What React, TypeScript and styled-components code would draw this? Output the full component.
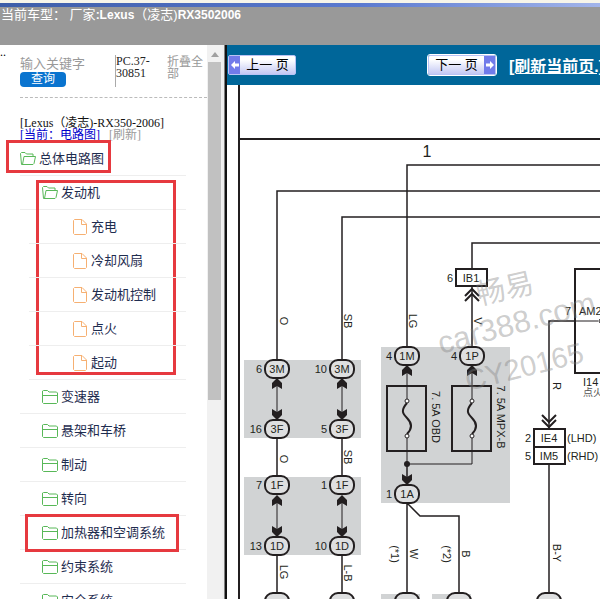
import React from "react";
import styled, { createGlobalStyle } from "styled-components";

const SANS = '"Liberation Sans", "Noto Sans CJK SC", sans-serif';
const SERIF = '"Liberation Serif", "Noto Sans CJK SC", serif';
const INK = "#231f20";

const GlobalStyle = createGlobalStyle`
  * { box-sizing: border-box; }
  body { margin: 0; background: #fff; font-family: ${SANS}; }
  button { border: 0; padding: 0; font: inherit; cursor: pointer; }
`;

const Page = styled.div`
  display: flex;
  flex-direction: column;
  height: 100vh;
  overflow: hidden;
`;

const WindowEdge = styled.div`
  flex: none;
  height: 7px;
  border-top: 3px solid #f7f5ea;
  background: linear-gradient(90deg, #3d5da8, #5b7ad0 60%, #a3b5ea);
`;

const Header = styled.header`
  flex: none;
  height: 38px;
  padding-left: 1px;
  background: #999;
  color: #fff;
  font-size: 13px;
  line-height: 16px;
  white-space: nowrap;
`;

const ModelName = styled.b`
  font-size: 12px;
`;

const Columns = styled.div`
  display: flex;
  flex: 1;
  min-height: 0;
`;

const Sidebar = styled.aside`
  display: flex;
  flex: none;
  width: 227px;
  background: #fff;
`;

const Dots = styled.span`
  flex: none;
  width: 20px;
  height: 14px;
  font: 12px/14px ${SERIF};
`;

const SidebarBody = styled.div`
  flex: 1;
  min-width: 0;
`;

const SearchPanel = styled.form`
  display: grid;
  grid-template-columns: 95px 52px 1fr;
  align-items: start;
  height: 53px;
  padding-top: 10px;
  border-bottom: 1px dashed #bbb;
`;

const SearchField = styled.div`
  display: flex;
  flex-direction: column;
  align-items: flex-start;
  padding-top: 1px;
`;

const SearchInput = styled.input`
  width: 86px;
  height: 16px;
  padding: 0;
  border: 0;
  outline: 0;
  background: transparent;
  font: 13px/16px ${SANS};
  &::placeholder { color: #999; opacity: 1; }
`;

const SearchButton = styled.button`
  width: 46px;
  height: 15px;
  border-radius: 4px;
  background: #0a74cf;
  color: #fff;
  font-size: 12px;
  line-height: 15px;
`;

const PartCode = styled.div`
  height: 32px;
  border-left: 1px solid #aaa;
  font: 12px/12px ${SERIF};
  color: #222;
`;

const CollapseButton = styled.button`
  padding-top: 1px;
  background: none;
  color: #999;
  font-size: 12px;
  line-height: 12px;
  text-align: left;
`;

const TreeHeading = styled.div`
  height: 44px;
  padding-top: 19px;
  font: 12px/12px ${SERIF};
  white-space: nowrap;
  color: #111;
`;

const HeadingLink = styled.a<{ $muted?: boolean }>`
  margin-right: 9px;
  color: ${(p) => (p.$muted ? "#999" : "#00c")};
  text-decoration: ${(p) => (p.$muted ? "none" : "underline")};
`;

const Tree = styled.ul<{ $nested?: boolean }>`
  width: ${(p) => (p.$nested ? "auto" : "166px")};
  margin: 0;
  padding: 0;
  list-style: none;
`;

const Item = styled.li`
  position: relative;
`;

const Row = styled.button<{ $level: number }>`
  display: flex;
  align-items: center;
  gap: ${(p) => (p.$level > 1 ? "4px" : "3px")};
  width: ${(p) => (p.$level > 1 ? "157px" : "100%")};
  height: 34px;
  margin-left: ${(p) => (p.$level > 1 ? "9px" : "0")};
  padding-left: ${(p) => [0, 22, 44][p.$level]}px;
  border-bottom: 1px solid #eee;
  background: none;
  color: #1f2d50;
  font-size: 13px;
  line-height: 18px;
  white-space: nowrap;
`;

const Highlight = styled.span<{ $left: number; $top: number; $width: number; $height: number }>`
  position: absolute;
  left: ${(p) => p.$left}px;
  top: ${(p) => p.$top}px;
  width: ${(p) => p.$width}px;
  height: ${(p) => p.$height}px;
  border: 3px solid #e6393f;
  pointer-events: none;
`;

const ScrollTrack = styled.div`
  display: flex;
  flex: none;
  flex-direction: column;
  align-items: center;
  width: 15px;
  background: #f1f1f1;
`;

const ScrollArrow = styled.span`
  height: 12px;
  margin-bottom: 5px;
  border: 4px solid transparent;
  border-top-width: 3px;
  border-bottom: 5px solid #a0a0a0;
`;

const ScrollThumb = styled.span`
  width: 13px;
  height: 338px;
  background: #c1c1c1;
`;

const Splitter = styled.div`
  flex: none;
  width: 5px;
  border-left: 2px solid #eee;
  border-right: 2px solid #111;
  background: #808080;
`;

const Main = styled.main`
  display: flex;
  flex: 1;
  flex-direction: column;
  min-width: 0;
  overflow: hidden;
`;

const Toolbar = styled.nav`
  display: flex;
  flex: none;
  align-items: center;
  height: 40px;
  padding-left: 1px;
  background: #069;
  white-space: nowrap;
`;

const PagerButton = styled.button<{ $next?: boolean }>`
  display: flex;
  flex: none;
  flex-direction: ${(p) => (p.$next ? "row-reverse" : "row")};
  width: 68px;
  height: 20px;
  margin-right: ${(p) => (p.$next ? 13 : 132)}px;
  border: 1px solid #b9c3f5;
  border-radius: 2px;
  outline: ${(p) => (p.$next ? "1px solid #fff" : "none")};
  background: linear-gradient(#fff 20%, #c3c8f4);
  color: #000;
  font-size: 13px;
  line-height: 18px;
  white-space: pre;
`;

const PagerArrow = styled.span`
  display: flex;
  align-items: center;
  justify-content: center;
  width: 11px;
  height: 18px;
  background: #717bea;
`;

const PagerLabel = styled.span`
  flex: 1;
`;

const RefreshLink = styled.a`
  color: #fff;
  font-size: 16px;
  font-weight: 700;
`;

const Canvas = styled.div`
  flex: 1;
  min-height: 0;
  overflow: hidden;
`;

const Diagram = styled.svg`
  display: block;
  font-family: ${SANS};
  font-size: 11px;
`;

type NodeData = {
  label: string;
  open?: boolean;
  file?: boolean;
  mark?: [number, number, number, number];
  children?: NodeData[];
};

const FolderIcon = ({ open }: { open?: boolean }) => (
  <svg width="16" height="15" viewBox="0 0 16 15" fill="none" stroke="#58b858" strokeLinejoin="round">
    {open ? (
      <>
        <path d="M3 13.5H1.5L.5 2.5 1.5 1.5H5L6.5 3H13V5.5" />
        <path d="M2.5 13.5 4 5.5H15.5L14 12.5 13 13.5Z" />
      </>
    ) : (
      <>
        <path d="M.5 12V2L1.5 1.5H5.5L7 3H14.5L15.5 4V13.5L14.5 14.5H1.5L.5 13.5V12" />
        <path d="M.5 6.5H15.5" />
      </>
    )}
  </svg>
);

const FileIcon = () => (
  <svg width="14" height="16" viewBox="0 0 14 16" fill="none" stroke="#f6b072" strokeLinejoin="round">
    <path d="M1.5.5H9L13.5 5V14.5L12.5 15.5H1.5L.5 14.5V1.5Z" />
    <path d="M8.5.5V5.5H13.5" />
  </svg>
);

const ArrowIcon = ({ right }: { right?: boolean }) => (
  <svg width="8" height="8" viewBox="0 0 8 8" fill="#fff">
    <path d={right ? "M8 4 4 0V2.5H0V5.5H4V8Z" : "M0 4 4 0V2.5H8V5.5H4V8Z"} />
  </svg>
);

const TREE: NodeData[] = [
  {
    label: "总体电路图",
    open: true,
    mark: [-14, -2, 105, 33],
    children: [
      {
        label: "发动机",
        open: true,
        mark: [16, 4, 140, 195],
        children: ["充电", "冷却风扇", "发动机控制", "点火", "起动"].map((label) => ({ label, file: true })),
      },
      { label: "变速器" },
      { label: "悬架和车桥" },
      { label: "制动" },
      { label: "转向" },
      { label: "加热器和空调系统", mark: [5, -2, 154, 38] },
      { label: "约束系统" },
      { label: "安全系统" },
    ],
  },
];

const TreeNode = ({ node, level }: { node: NodeData; level: number }) => (
  <Item>
    <Row type="button" $level={level}>
      {node.file ? <FileIcon /> : <FolderIcon open={node.open} />}
      {node.label}
    </Row>
    {node.mark && (
      <Highlight $left={node.mark[0]} $top={node.mark[1]} $width={node.mark[2]} $height={node.mark[3]} />
    )}
    {node.children && (
      <Tree $nested>
        {node.children.map((child) => (
          <TreeNode key={child.label} node={child} level={level + 1} />
        ))}
      </Tree>
    )}
  </Item>
);

const Pill = ({ x, y, label, pin }: { x: number; y: number; label?: string; pin?: string }) => (
  <g>
    <rect x={x - 12} y={y - 9} width="24" height="18" rx="8" fill="#dedfe0" stroke={INK} strokeWidth="2" />
    {label && <text x={x} y={y + 4} textAnchor="middle">{label}</text>}
    {pin && <text x={x - 15} y={y + 4} textAnchor="end">{pin}</text>}
  </g>
);

const Head = ({ x, y, down }: { x: number; y: number; down?: boolean }) => (
  <path d="M0 0 5 5V11L0 8-5 11V5Z" transform={`translate(${x} ${y}) scale(1 ${down ? -1 : 1})`} />
);

const WireName = ({ x, y, children }: { x: number; y: number; children: string }) => (
  <text transform={`translate(${x} ${y}) rotate(90)`} y="4" textAnchor="middle">{children}</text>
);

const Fuse = ({ x, rating }: { x: number; rating: string }) => (
  <g>
    <rect x={x - 20} y="386" width="39" height="65" fill="none" stroke={INK} strokeWidth="2" />
    <path d={`M${x} 366V399M${x} 438V464`} stroke={INK} fill="none" />
    <path d={`M${x} 403C${x - 6} 410 ${x - 5} 413 ${x} 418S${x + 6} 428 ${x} 434`} stroke={INK} strokeWidth="2" fill="none" />
    <circle cx={x} cy="401" r="2" fill="#fff" stroke={INK} />
    <circle cx={x} cy="436" r="2" fill="#fff" stroke={INK} />
    <WireName x={x + 29} y={417}>{rating}</WireName>
  </g>
);

const LEFT_CONNECTORS = [
  { x: 277, pins: ["6", "16", "7", "13"] },
  { x: 342, pins: ["10", "5", "1", "10"] },
];

const Wiring = () => (
  <Diagram width="1200" height="900" viewBox="227 85 1200 900" fill={INK} role="img" aria-label="电路图">
    <g fill="#d1d3d4">
      <path d="M244 360H361V438H244ZM244 477H361V555H244ZM381 347H510V503H381ZM381 594H420V660H381ZM432 594H471V660H432Z" />
    </g>
    <path d="M239 85V985M238 139H1427" stroke={INK} strokeWidth="2" fill="none" />
    <g stroke={INK} strokeWidth="1.5" fill="none">
      <path d="M277 360V191H1427M342 360V217H1427M407 347V165H1427M472 268V243H1427M472 287V347" />
      <path d="M277 438V477M342 438V477M277 555V594M342 555V594M407 464V485M407 503V594M407 503 420 516H459V594" />
      <path d="M549 429V321H575M549 464V594" />
      <path d="M575 321H598M407 464H472" strokeWidth="1" />
      <path d="M465 296 472 289 479 296M465 301 472 294 479 301M542 415 549 422 556 415M542 420 549 427 556 420" strokeWidth="2" />
      <path d="M456 269H487V286H456ZM534 429H565V447H534ZM534 447H565V464H534ZM1427 269H575V373H1427" strokeWidth="2" />
      <circle cx="601" cy="321" r="2" strokeWidth="1" />
    </g>
    <text x="427" y="157" fontSize="16" textAnchor="middle">1</text>
    <WireName x={284} y={321}>O</WireName>
    <WireName x={348} y={321}>SB</WireName>
    <WireName x={413} y={321}>LG</WireName>
    <WireName x={478} y={321}>V</WireName>

    {LEFT_CONNECTORS.map(({ x, pins }) => (
      <g key={x}>
        <path d={`M${x} 380V418M${x} 496V535`} stroke={INK} />
        <Head x={x} y={378} />
        <Head x={x} y={420} down />
        <Head x={x} y={495} />
        <Head x={x} y={537} down />
        <Pill x={x} y={369} label="3M" pin={pins[0]} />
        <Pill x={x} y={429} label="3F" pin={pins[1]} />
        <Pill x={x} y={485} label="1F" pin={pins[2]} />
        <Pill x={x} y={546} label="1D" pin={pins[3]} />
      </g>
    ))}
    <WireName x={284} y={459}>O</WireName>
    <WireName x={348} y={457}>SB</WireName>
    <WireName x={284} y={572}>LG</WireName>
    <WireName x={348} y={573}>L-B</WireName>

    <Fuse x={407} rating="7. 5A OBD" />
    <Fuse x={472} rating="7. 5A MPX-B" />
    <Head x={407} y={365} />
    <Head x={472} y={365} />
    <Head x={407} y={485} down />
    <circle cx="407" cy="464" r="3" />
    <Pill x={407} y={356} label="1M" pin="4" />
    <Pill x={472} y={356} label="1P" pin="4" />
    <Pill x={407} y={494} label="1A" pin="1" />
    <WireName x={395} y={554}>(*1)</WireName>
    <WireName x={414} y={554}>W</WireName>
    <WireName x={447} y={554}>(*2)</WireName>
    <WireName x={466} y={554}>B</WireName>
    {[277, 342, 407, 459, 549].map((x) => (
      <Pill key={x} x={x} y={602} />
    ))}

    <text x="453" y="282" textAnchor="end">6</text>
    <text x="471" y="282" textAnchor="middle">IB1</text>
    <text x="571" y="315" textAnchor="end">7</text>
    <text x="579" y="315">AM2</text>
    <text x="583" y="386">I14</text>
    <text x="583" y="396" fontSize="10" fill="#555">点火</text>
    <WireName x={557} y={386}>R</WireName>
    <WireName x={557} y={553}>B-Y</WireName>
    <text x="531" y="442" textAnchor="end">2</text>
    <text x="549" y="442" textAnchor="middle">IE4</text>
    <text x="567" y="442">(LHD)</text>
    <text x="531" y="460" textAnchor="end">5</text>
    <text x="549" y="460" textAnchor="middle">IM5</text>
    <text x="567" y="460">(RHD)</text>

    <g fill="#808080" fillOpacity="0.4" fontSize="29">
      <text transform="translate(479 305) rotate(-13)">畅易</text>
      <text transform="translate(441 354) rotate(-15)" fontSize="31">car388.com</text>
      <text transform="translate(468 391) rotate(-14)">CY20165</text>
    </g>
  </Diagram>
);

export default function App() {
  return (
    <Page>
      <GlobalStyle />
      <WindowEdge />
      <Header>
        当前车型： 厂家<ModelName>:Lexus</ModelName>（凌志)<ModelName>RX3502006</ModelName>
      </Header>
      <Columns>
        <Sidebar>
          <Dots>..</Dots>
          <SidebarBody>
            <SearchPanel onSubmit={(e) => e.preventDefault()}>
              <SearchField>
                <SearchInput type="text" placeholder="输入关键字" aria-label="输入关键字" />
                <SearchButton type="submit">查询</SearchButton>
              </SearchField>
              <PartCode>PC.37-<br />30851</PartCode>
              <CollapseButton type="button">折叠全部</CollapseButton>
            </SearchPanel>
            <TreeHeading>
              <div>[Lexus（凌志)-RX350-2006]</div>
              <HeadingLink href="#">[当前：电路图]</HeadingLink>
              <HeadingLink href="#" $muted>[刷新]</HeadingLink>
            </TreeHeading>
            <Tree>
              {TREE.map((node) => (
                <TreeNode key={node.label} node={node} level={0} />
              ))}
            </Tree>
          </SidebarBody>
          <ScrollTrack>
            <ScrollArrow />
            <ScrollThumb />
          </ScrollTrack>
          <Splitter />
        </Sidebar>
        <Main>
          <Toolbar>
            <PagerButton type="button">
              <PagerArrow><ArrowIcon /></PagerArrow>
              <PagerLabel>上一 页</PagerLabel>
            </PagerButton>
            <PagerButton type="button" $next>
              <PagerArrow><ArrowIcon right /></PagerArrow>
              <PagerLabel>下一 页</PagerLabel>
            </PagerButton>
            <RefreshLink href="#">[刷新当前页.]</RefreshLink>
          </Toolbar>
          <Canvas>
            <Wiring />
          </Canvas>
        </Main>
      </Columns>
    </Page>
  );
}
